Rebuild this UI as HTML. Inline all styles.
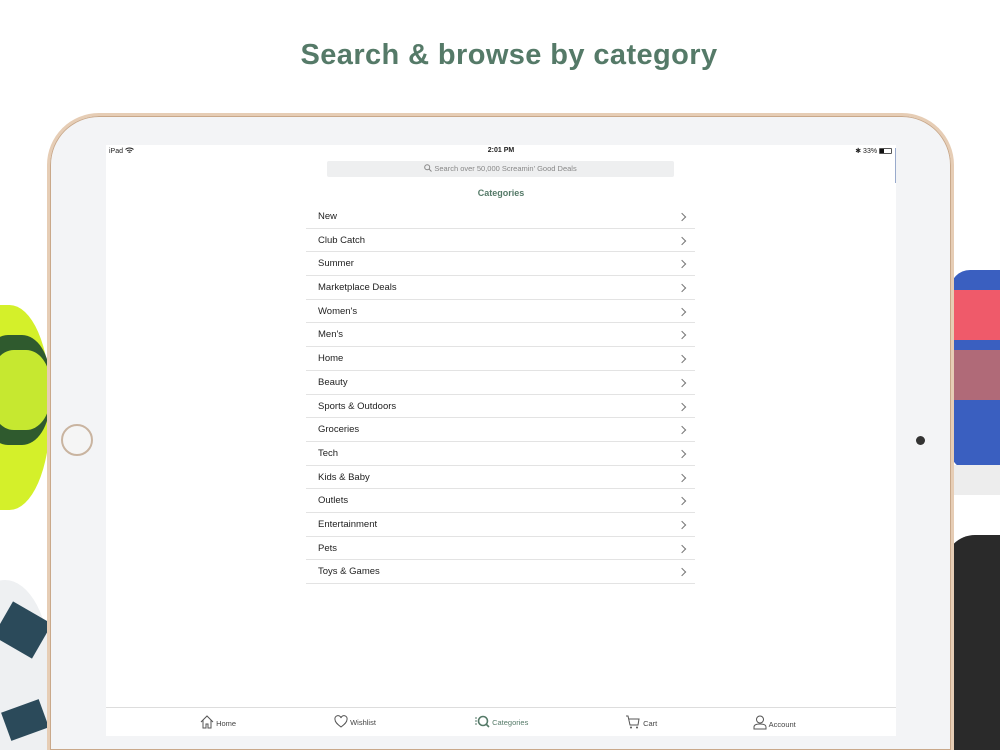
<!DOCTYPE html>
<html><head><meta charset="utf-8"><style>
*{margin:0;padding:0;box-sizing:border-box}
html,body{width:1000px;height:750px;overflow:hidden}
body{background:#fff;position:relative;font-family:"Liberation Sans",sans-serif}
.title{position:absolute;top:39px;left:9px;width:1000px;text-align:center;font-size:29px;font-weight:bold;color:#557a68;letter-spacing:0.4px}
.bezel{position:absolute;left:47px;top:113px;width:907px;height:637px;border-radius:52px 52px 0 0;background:#f3f4f6;border:3px solid #e6cdb5;border-bottom:none;box-shadow:inset 0 0 0 1px #c9a88a}
.screen{position:absolute;left:106px;top:145px;width:790px;height:591px;background:#fff}
.home{position:absolute;left:61px;top:424px;width:32px;height:32px;border-radius:50%;border:2px solid #c9b4a0;background:#f5f5f5}
.cam{position:absolute;left:916px;top:436px;width:9px;height:9px;border-radius:50%;background:#333}
.status{position:absolute;top:2px;font-size:7px;color:#222}
.search{position:absolute;left:221px;top:16px;width:347px;height:16px;background:#eeeff0;border-radius:2px;font-size:7.5px;color:#888;text-align:center;line-height:16px}
.cat{position:absolute;top:43px;left:0;width:790px;text-align:center;font-size:9px;color:#557a68;font-weight:bold}
.list{position:absolute;left:200px;top:60px;width:389px}
.row{height:23.7px;border-bottom:1px solid #e3e3e3;font-size:9.5px;color:#222;line-height:24px;padding-left:12px;position:relative}
.row:after{content:"";position:absolute;right:10px;top:9px;width:5px;height:5px;border-right:1px solid #777;border-top:1px solid #777;transform:rotate(45deg)}
.tab{position:absolute;left:0;top:562px;width:790px;height:29px;border-top:1px solid #ddd;background:#fff;font-size:7.5px;color:#444}
.ti{position:absolute;top:7px}
</style></head><body>
<div class="title">Search &amp; browse by category</div>
<div style="position:absolute;left:-40px;top:305px;width:90px;height:205px;border-radius:45%;background:#d4f02a"></div>
<div style="position:absolute;left:-20px;top:335px;width:70px;height:110px;border-radius:40%;background:#2f5a2e"></div>
<div style="position:absolute;left:-10px;top:350px;width:60px;height:80px;border-radius:40%;background:#c6e830"></div>
<div style="position:absolute;left:-40px;top:580px;width:90px;height:170px;border-radius:50% 50% 0 0;background:#eef0f2"></div>
<div style="position:absolute;left:0px;top:610px;width:45px;height:40px;background:#2b4a5a;transform:rotate(30deg)"></div>
<div style="position:absolute;left:5px;top:705px;width:40px;height:30px;background:#2b4a5a;transform:rotate(-20deg)"></div>
<div style="position:absolute;left:950px;top:270px;width:50px;height:200px;border-radius:20px 0 0 20px;background:#3a5fc0"></div>
<div style="position:absolute;left:950px;top:290px;width:50px;height:50px;background:#ef5a6a"></div>
<div style="position:absolute;left:950px;top:350px;width:50px;height:50px;background:#b06a78"></div>
<div style="position:absolute;left:950px;top:465px;width:50px;height:30px;background:#ededed"></div>
<div style="position:absolute;left:945px;top:535px;width:55px;height:215px;border-radius:30px 0 0 0;background:#2a2a2a"></div>
<div class="bezel"></div>
<div class="home"></div>
<div class="cam"></div>
<div class="screen">
<div class="status" style="left:3px">iPad <svg width="9" height="7" viewBox="0 0 9 7" style="vertical-align:-1px"><path d="M0.5 2.5A6 6 0 0 1 8.5 2.5M2 4A4 4 0 0 1 7 4M3.5 5.5A1.5 1.5 0 0 1 5.5 5.5" fill="none" stroke="#222" stroke-width="1"/></svg></div>
<div class="status" style="left:0;width:790px;text-align:center;font-weight:bold">2:01 PM</div>
<div class="status" style="right:4px">✱ 33% <span style="display:inline-block;width:13px;height:6px;border:1px solid #555;border-radius:1px;vertical-align:-1px;background:linear-gradient(90deg,#111 35%,#fff 35%)"></span></div>
<div style="position:absolute;left:789px;top:3px;width:1px;height:35px;background:#9ac"></div>
<div class="search"><svg width="8" height="8" viewBox="0 0 8 8" style="vertical-align:-1px"><circle cx="3.2" cy="3.2" r="2.5" fill="none" stroke="#888"/><path d="M5 5L7.5 7.5" stroke="#888"/></svg> Search over 50,000 Screamin' Good Deals</div>
<div class="cat">Categories</div>
<div class="list">
<div class="row">New</div><div class="row">Club Catch</div><div class="row">Summer</div><div class="row">Marketplace Deals</div><div class="row">Women's</div><div class="row">Men's</div><div class="row">Home</div><div class="row">Beauty</div><div class="row">Sports &amp; Outdoors</div><div class="row">Groceries</div><div class="row">Tech</div><div class="row">Kids &amp; Baby</div><div class="row">Outlets</div><div class="row">Entertainment</div><div class="row">Pets</div><div class="row">Toys &amp; Games</div>
</div>
<div class="tab">
<div class="ti" style="left:94px"><svg width="14" height="14" viewBox="0 0 14 14" style="vertical-align:-3px"><path d="M1 7L7 1L13 7M3 5V13H6V9H8V13H11V5" fill="none" stroke="#555" stroke-width="1"/></svg> Home</div>
<div class="ti" style="left:228px"><svg width="14" height="13" viewBox="0 0 14 13" style="vertical-align:-3px"><path d="M7 12C3 9 1 7 1 4.5A3 3 0 0 1 7 3A3 3 0 0 1 13 4.5C13 7 11 9 7 12Z" fill="none" stroke="#555"/></svg> Wishlist</div>
<div class="ti" style="left:368px;color:#557a68"><svg width="16" height="13" viewBox="0 0 16 13" style="vertical-align:-3px"><path d="M1 3H3M1 6H3M1 9H3" stroke="#557a68"/><circle cx="9" cy="6" r="4.5" fill="none" stroke="#557a68" stroke-width="1.6"/><path d="M12 9L15 12" stroke="#557a68" stroke-width="1.6"/></svg> Categories</div>
<div class="ti" style="left:519px"><svg width="16" height="14" viewBox="0 0 16 14" style="vertical-align:-3px"><path d="M1 1H3L5 10H13L14 4H4" fill="none" stroke="#555"/><circle cx="6" cy="12.5" r="1" fill="#555"/><circle cx="12" cy="12.5" r="1" fill="#555"/></svg> Cart</div>
<div class="ti" style="left:647px"><svg width="14" height="15" viewBox="0 0 14 15" style="vertical-align:-3px"><circle cx="7" cy="4.5" r="3.5" fill="none" stroke="#555"/><path d="M1 14V12C1 10 3 9 7 9C11 9 13 10 13 12V14Z" fill="none" stroke="#555"/></svg> Account</div>
</div>
</div>
</body></html>
